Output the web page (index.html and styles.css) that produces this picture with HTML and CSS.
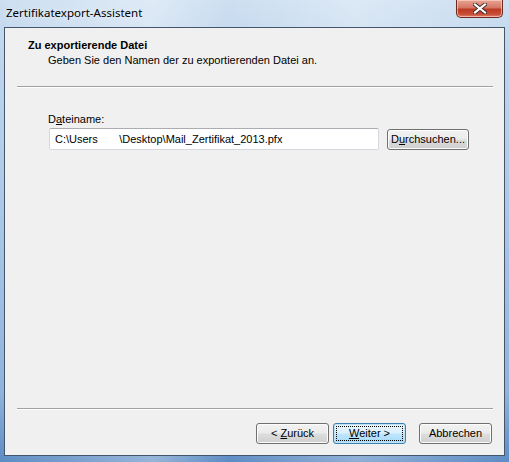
FILE: index.html
```html
<!DOCTYPE html>
<html lang="de">
<head>
<meta charset="utf-8">
<title>Zertifikatexport-Assistent</title>
<link rel="stylesheet" href="styles.css">
</head>
<body>
<div class="window">
  <div class="titlebar">
    <div class="title">Zertifikatexport-Assistent</div>
    <button class="close" aria-label="Schließen">
      <svg width="14" height="11" viewBox="0 0 14 11">
        <path d="M2 1.5 L12 9.5 M12 1.5 L2 9.5" stroke="#3a2a2a" stroke-width="4" stroke-linecap="square"/>
        <path d="M2 1.5 L12 9.5 M12 1.5 L2 9.5" stroke="#ffffff" stroke-width="2.2" stroke-linecap="square"/>
      </svg>
    </button>
  </div>
  <div class="client">
    <div class="header">
      <div class="h-title">Zu exportierende Datei</div>
      <div class="h-sub">Geben Sie den Namen der zu exportierenden Datei an.</div>
    </div>
    <div class="sep sep-top"></div>
    <div class="content">
      <label class="label">D<u>a</u>teiname:</label>
      <div class="row">
        <div class="input">C:\Users&nbsp;&nbsp;&nbsp;&nbsp;&nbsp;&nbsp;&nbsp;\Desktop\Mail_Zertifikat_2013.pfx</div>
        <button class="btn browse">D<u>u</u>rchsuchen...</button>
      </div>
    </div>
    <div class="sep sep-bottom"></div>
    <div class="footer">
      <button class="btn">&lt; <u>Z</u>urück</button>
      <button class="btn focused"><span class="focusring"><u>W</u>eiter &gt;</span></button>
      <button class="btn cancel">Abbrechen</button>
    </div>
  </div>
</div>
</body>
</html>
```
FILE: styles.css
```css
html, body {
  margin: 0;
  padding: 0;
}
body {
  width: 509px;
  height: 462px;
  overflow: hidden;
  font-family: "Liberation Sans", Arial, sans-serif;
  font-size: 11px;
  color: #000;
}
.window {
  width: 509px;
  height: 462px;
  display: flex;
  flex-direction: column;
  background:
    linear-gradient(90deg, rgba(255,255,255,0) 0%, rgba(255,255,255,0.35) 30%, rgba(255,255,255,0) 45%, rgba(255,255,255,0.3) 70%, rgba(255,255,255,0) 100%),
    linear-gradient(180deg, #cddff1 0%, #bfd5ec 12%, #a9c6e6 50%, #8fb3dc 85%, #5d8cc4 100%);
}
.titlebar {
  height: 27px;
  flex: none;
  display: flex;
  justify-content: space-between;
  align-items: flex-start;
}
.title {
  font-family: "Noto Sans", "Open Sans", sans-serif;
  font-size: 11.5px;
  line-height: 16px;
  padding: 5px 0 0 6px;
  color: #000;
  text-shadow: 0 0 6px rgba(255,255,255,0.9);
}
.close {
  width: 47px;
  height: 18px;
  margin-right: 6px;
  padding: 0;
  border: 1px solid #6b2a22;
  border-top: none;
  border-radius: 0 0 5px 5px;
  background: linear-gradient(180deg, #e8a493 0%, #d47764 45%, #bd3a22 55%, #c9503a 85%, #e08a6e 100%);
  box-shadow: inset 0 0 0 1px rgba(255,220,210,0.6);
  display: flex;
  align-items: center;
  justify-content: center;
}
.client {
  flex: 1;
  margin: 0 4px 6px 4px;
  border: 1px solid #44566b;
  background: #f0f0f0;
  display: flex;
  flex-direction: column;
}
.header {
  padding: 11px 0 0 23px;
  height: 47px;
}
.h-title {
  font-weight: bold;
  line-height: 13px;
}
.h-sub {
  padding-left: 20px;
  margin-top: 2px;
  line-height: 13px;
}
.sep {
  height: 1px;
  border-bottom: 1px solid #ffffff;
  background: #a0a0a0;
  margin: 0 11px 0 12px;
}
.content {
  flex: 1;
  padding: 25px 0 0 43px;
}
.label {
  display: block;
  line-height: 13px;
}
.row {
  display: flex;
  gap: 8px;
  margin-top: 2px;
  align-items: center;
}
.input {
  width: 323px;
  height: 20px;
  padding-left: 5px;
  margin-left: 1px;
  line-height: 20px;
  background: #fff;
  border: 1px solid #d5d9df;
  border-top-color: #abadb3;
  border-radius: 2px;
  white-space: pre;
}
.btn {
  font-family: "Liberation Sans", Arial, sans-serif;
  font-size: 11px;
  color: #000;
  height: 21px;
  width: 73px;
  padding: 0;
  border: 1px solid #707070;
  border-radius: 3px;
  background: linear-gradient(180deg, #f2f2f2 0%, #ebebeb 48%, #dddddd 52%, #cfcfcf 100%);
  box-shadow: inset 0 0 0 1px #fcfcfc;
  line-height: 17px;
}
.browse {
  width: 82px;
}
.footer {
  height: 45px;
  display: flex;
  justify-content: flex-end;
  align-items: flex-start;
  padding: 13px 12px 0 0;
  box-sizing: border-box;
}
.footer .btn + .btn {
  margin-left: 4px;
}
.footer .cancel {
  margin-left: 13px !important;
}
.focused {
  border-color: #3c7fb1;
  background: linear-gradient(180deg, #eaf6fd 0%, #d9f0fc 48%, #bee6fd 52%, #a7d9f5 100%);
  box-shadow: inset 0 0 0 1px #bfe3f7;
  padding: 2px;
}
.focusring {
  display: block;
  height: 13px;
  line-height: 13px;
  border: 1px dotted #000;
}
```
